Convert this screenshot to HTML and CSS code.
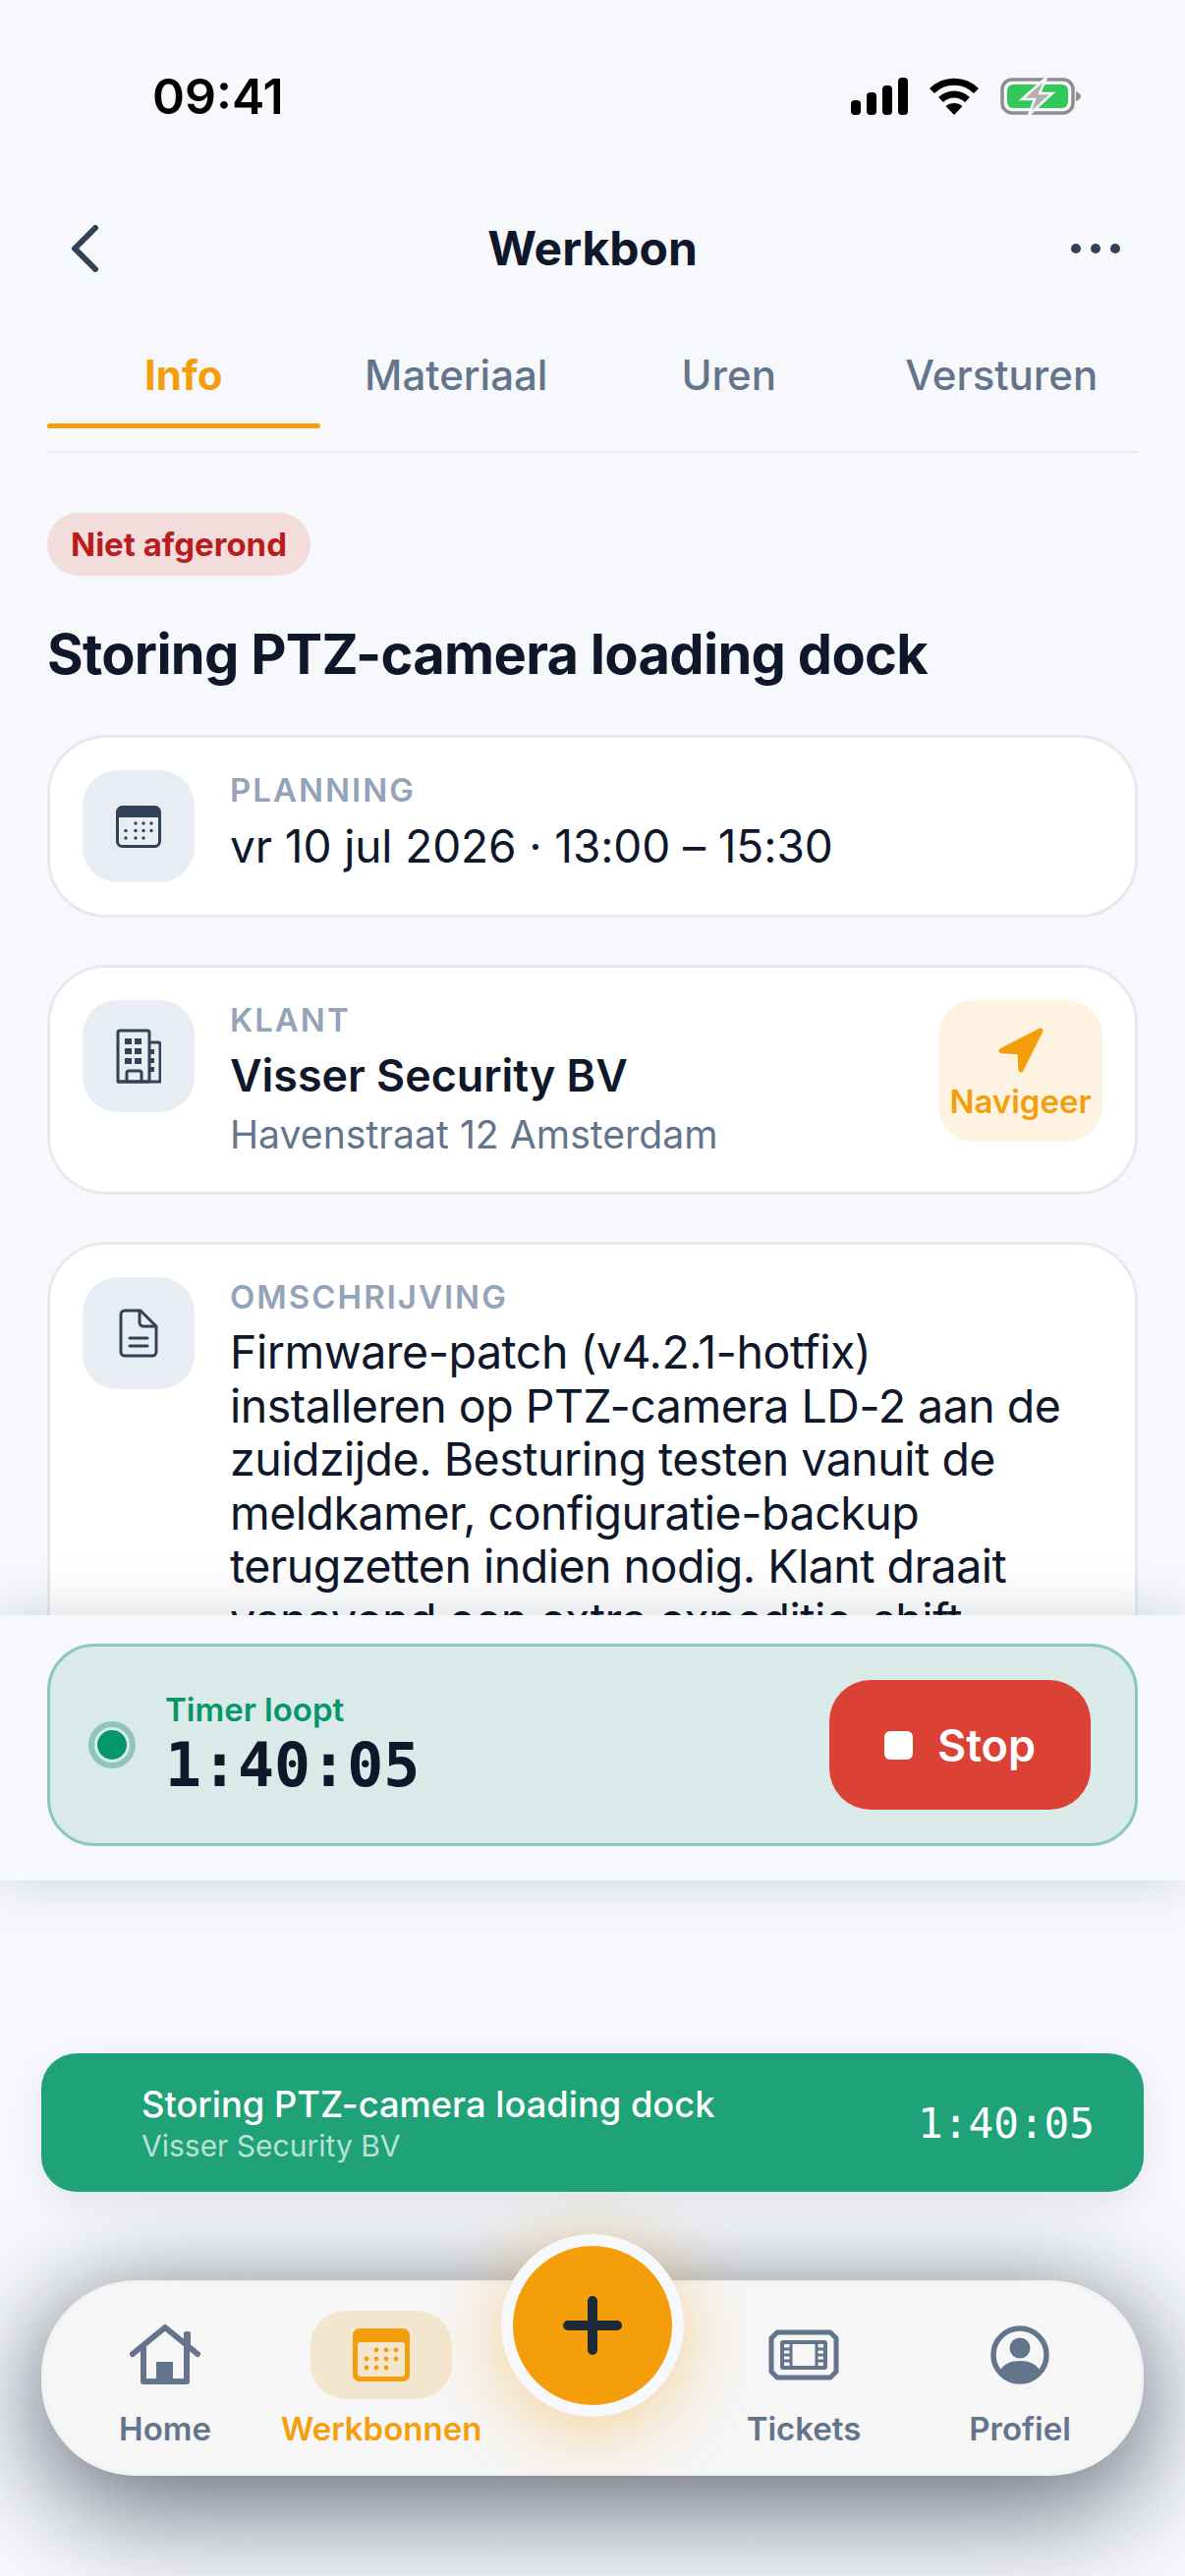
FILE: index.html
```html
<!DOCTYPE html>
<html lang="nl">
<head>
<meta charset="utf-8">
<title>Werkbon</title>
<link rel="stylesheet" href="styles.css">
</head>
<body>
<div class="app">
  <div class="status">
    <span class="clock">09:41</span>
    <div class="status-icons">
      <svg class="i-signal" viewBox="0 0 58 38"><rect x="0" y="23" width="10" height="15" rx="4"/><rect x="16" y="15" width="10" height="23" rx="4"/><rect x="32" y="8" width="10" height="30" rx="4"/><rect x="48" y="0" width="10" height="38" rx="4"/></svg>
      <svg class="i-wifi" viewBox="0 0 52 38"><path d="M3.500 13.500C16 1 36 1 48.500 13.500" fill="none" stroke="#000" stroke-width="7"/><path d="M12.500 22.500C20 15 32 15 39.500 22.500" fill="none" stroke="#000" stroke-width="7"/><path d="M17.500 29C22 25 30 25 34.500 29L26 38Z"/></svg>
      <svg class="i-batt" viewBox="0 0 82 40"><rect x="2" y="3" width="72" height="34" rx="10" fill="none" stroke="#8e8e8e" stroke-width="3.500"/><rect x="7" y="8" width="62" height="24" rx="6" fill="#34c759"/><path d="M77 15c3 1 5 3 5 5s-2 4-5 5Z" fill="#8e8e8e"/><path d="M47 1 22 23h13l-6 16 24-22H40Z" fill="#b0b0b0" stroke="#f6f8fb" stroke-width="2.500"/></svg>
    </div>
  </div>

  <header class="topbar">
    <svg class="i-back" viewBox="0 0 30 48"><path d="M26 3 5 24l21 21" fill="none" stroke="#334155" stroke-width="6" stroke-linecap="round" stroke-linejoin="round"/></svg>
    <h1 class="topbar-title">Werkbon</h1>
    <div class="dots"><span></span><span></span><span></span></div>
  </header>

  <nav class="tabs">
    <div class="tab tab-on">Info</div>
    <div class="tab">Materiaal</div>
    <div class="tab">Uren</div>
    <div class="tab">Versturen</div>
  </nav>

  <main class="scroll">
    <span class="badge">Niet afgerond</span>
    <h2 class="job-title">Storing PTZ-camera loading dock</h2>

    <section class="card">
      <div class="icon-box">
        <svg class="i-cal" viewBox="0 0 46 43"><rect x="1.500" y="1.500" width="43" height="40" rx="5" fill="none" stroke="#334155" stroke-width="3"/><path d="M1.500 7a5 5 0 0 1 5-5.500h33a5 5 0 0 1 5 5.500v5h-43Z" fill="#334155"/><g fill="#334155"><circle cx="20" cy="18" r="1.700"/><circle cx="28" cy="18" r="1.700"/><circle cx="36" cy="18" r="1.700"/><circle cx="10" cy="25.500" r="1.700"/><circle cx="20" cy="25.500" r="1.700"/><circle cx="28" cy="25.500" r="1.700"/><circle cx="36" cy="25.500" r="1.700"/><circle cx="10" cy="33" r="1.700"/><circle cx="20" cy="33" r="1.700"/><circle cx="28" cy="33" r="1.700"/></g></svg>
      </div>
      <div class="body">
        <div class="label">PLANNING</div>
        <div class="value">vr 10 jul 2026 · 13:00 – 15:30</div>
      </div>
    </section>

    <section class="card">
      <div class="icon-box">
        <svg class="i-bld" viewBox="0 0 46 56"><path d="M2 54V4a2 2 0 0 1 2-2h28a2 2 0 0 1 2 2v50Z" fill="none" stroke="#334155" stroke-width="3" stroke-linejoin="round"/><path d="M34 14h9a2 2 0 0 1 2 2v38H2" fill="none" stroke="#334155" stroke-width="3" stroke-linejoin="round"/><path d="M11 54v-9a2 2 0 0 1 2-2h11a2 2 0 0 1 2 2v9" fill="none" stroke="#334155" stroke-width="3"/><g fill="#334155"><rect x="9" y="10" width="7" height="6"/><rect x="19" y="10" width="7" height="6"/><rect x="9" y="20" width="7" height="6"/><rect x="19" y="20" width="7" height="6"/><rect x="9" y="30" width="7" height="6"/><rect x="19" y="30" width="7" height="6"/><rect x="34" y="21" width="5" height="5"/><rect x="34" y="30" width="5" height="5"/><rect x="34" y="39" width="5" height="5"/></g></svg>
      </div>
      <div class="body">
        <div class="label">KLANT</div>
        <div class="value value-strong">Visser Security BV</div>
        <div class="address">Havenstraat 12 Amsterdam</div>
      </div>
      <div class="nav-btn">
        <svg class="i-nav" viewBox="0 0 44 44"><path d="M41 3 3 22.500 21 23.500 22 41Z" fill="#f59e0b" stroke="#f59e0b" stroke-width="5" stroke-linejoin="round"/></svg>
        <span class="nav-btn-text">Navigeer</span>
      </div>
    </section>

    <section class="card">
      <div class="icon-box">
        <svg class="i-doc" viewBox="0 0 40 50"><path d="M22 2H6a4 4 0 0 0-4 4v38a4 4 0 0 0 4 4h28a4 4 0 0 0 4-4V18Z" fill="none" stroke="#334155" stroke-width="3" stroke-linejoin="round"/><path d="M21 2v12a4 4 0 0 0 4 4h13" fill="none" stroke="#334155" stroke-width="3"/><path d="M11 30h18M11 38h18" stroke="#334155" stroke-width="3" stroke-linecap="round"/></svg>
      </div>
      <div class="body">
        <div class="label">OMSCHRIJVING</div>
        <div class="desc">Firmware-patch (v4.2.1-hotfix) installeren op PTZ-camera LD-2 aan de zuidzijde. Besturing testen vanuit de meldkamer, configuratie-backup terugzetten indien nodig. Klant draait vanavond een extra expeditie-shift.</div>
      </div>
    </section>
  </main>

  <section class="timer-panel">
    <div class="timer">
      <span class="pulse"><span class="pulse-dot"></span></span>
      <div class="timer-body">
        <div class="timer-label">Timer loopt</div>
        <div class="timer-time">1:40:05</div>
      </div>
      <div class="stop"><span class="stop-square"></span><span>Stop</span></div>
    </div>
  </section>

  <section class="live-bar">
    <div class="live-text">
      <div class="live-title">Storing PTZ-camera loading dock</div>
      <div class="live-sub">Visser Security BV</div>
    </div>
    <div class="live-time">1:40:05</div>
  </section>

  <nav class="tabbar">
    <div class="item">
      <div class="item-icon">
        <svg class="i-home" viewBox="0 0 72 62"><path d="M3 30 36 3l33 27" fill="none" stroke="#64748b" stroke-width="6" stroke-linecap="round" stroke-linejoin="round"/><path d="M14 23v35h44V23" fill="none" stroke="#64748b" stroke-width="6" stroke-linejoin="round"/><rect x="27" y="38" width="17" height="20" fill="#64748b"/><rect x="55" y="7" width="7" height="20" rx="2" fill="#64748b"/></svg>
      </div>
      <span class="item-label">Home</span>
    </div>
    <div class="item item-on">
      <div class="item-icon item-icon-on">
        <svg class="i-cal2" viewBox="0 0 58 54"><rect x="0" y="0" width="58" height="54" rx="7" fill="#f59e0b"/><rect x="5" y="14" width="48" height="35" rx="3" fill="#f3e6cf"/><g fill="#f59e0b"><circle cx="24" cy="22" r="2.400"/><circle cx="34" cy="22" r="2.400"/><circle cx="44" cy="22" r="2.400"/><circle cx="14" cy="31" r="2.400"/><circle cx="24" cy="31" r="2.400"/><circle cx="34" cy="31" r="2.400"/><circle cx="44" cy="31" r="2.400"/><circle cx="14" cy="40" r="2.400"/><circle cx="24" cy="40" r="2.400"/><circle cx="34" cy="40" r="2.400"/></g></svg>
      </div>
      <span class="item-label">Werkbonnen</span>
    </div>
    <div class="item-gap"></div>
    <div class="item">
      <div class="item-icon">
        <svg class="i-ticket" viewBox="0 0 72 52"><path d="M9 3h54l6 6v34l-6 6H9l-6-6V9Z" fill="none" stroke="#64748b" stroke-width="5" stroke-linejoin="round"/><rect x="14" y="13" width="44" height="26" fill="none" stroke="#64748b" stroke-width="4" rx="1"/><path d="M23 13v26M49 13v26" stroke="#64748b" stroke-width="3"/><path d="M14 20h9M14 26h9M14 32h9M49 20h9M49 26h9M49 32h9" stroke="#64748b" stroke-width="3"/></svg>
      </div>
      <span class="item-label">Tickets</span>
    </div>
    <div class="item">
      <div class="item-icon">
        <svg class="i-user" viewBox="0 0 60 60"><circle cx="30" cy="30" r="27" fill="none" stroke="#64748b" stroke-width="5.500"/><circle cx="30" cy="23" r="10.500" fill="#64748b"/><path d="M9 47c4-8 12-11 21-11s17 3 21 11c-5 7-13 11-21 11S14 54 9 47Z" fill="#64748b"/></svg>
      </div>
      <span class="item-label">Profiel</span>
    </div>
    <div class="fab">
      <svg class="i-plus" viewBox="0 0 60 60"><path d="M30 5v50M5 30h50" stroke="#1f2937" stroke-width="10" stroke-linecap="round"/></svg>
    </div>
  </nav>
</div>
</body>
</html>
```
FILE: styles.css
```css
* { box-sizing: border-box; }
html, body { margin: 0; padding: 0; }
body {
  width: 1206px;
  height: 2622px;
  overflow: hidden;
  background: #f6f8fb;
  font-family: Inter, "Noto Sans", sans-serif;
  color: #0f172a;
}
.app { width: 1206px; height: 2622px; display: flex; flex-direction: column; }

.status { height: 196px; display: flex; align-items: center; justify-content: space-between; padding: 0 106px 0 155px; flex: none; }
.clock { font-size: 50px; font-weight: 600; color: #000; line-height: 1; }
.status-icons { display: flex; align-items: center; gap: 23px; }
.i-signal { width: 58px; height: 38px; display: block; }
.i-wifi { width: 52px; height: 38px; display: block; margin-left: -2px; }
.i-batt { width: 82px; height: 40px; display: block; margin-left: -2px; }

.topbar { height: 114px; flex: none; display: flex; align-items: center; justify-content: space-between; padding: 0 66px 0 71px; position: relative; }
.i-back { width: 30px; height: 48px; display: block; }
.topbar-title { position: absolute; left: 0; right: 0; text-align: center; margin: 0; font-size: 48px; font-weight: 700; line-height: 58px; color: #0f172a; }
.dots { display: flex; gap: 10px; }
.dots span { width: 10px; height: 10px; border-radius: 50%; background: #334155; }

.tabs { flex: none; margin: 0 48px; display: flex; padding-bottom: 23px; border-bottom: 2px solid #e7ebf0; }
.tab { flex: 1; padding-top: 41px; text-align: center; font-size: 42px; line-height: 62px; font-weight: 500; color: #64748b; height: 126px; }
.tab-on { color: #f59e0b; font-weight: 700; }
.tab-on::after { content: ""; display: block; height: 5px; margin-top: 18px; border-radius: 3px; background: #f59e0b; }

.scroll { height: 1183px; flex: none; overflow: hidden; padding: 61px 48px 0; display: flex; flex-direction: column; }
.badge { align-self: flex-start; height: 64px; padding: 0 24px; border-radius: 32px; background: #f2dcdc; color: #b91c1c; font-size: 33px; font-weight: 700; line-height: 64px; flex: none; }
.job-title { margin: 47px 0 0; font-size: 56px; line-height: 66px; font-weight: 700; letter-spacing: -0.700px; color: #0f172a; flex: none; }
.card { flex: none; margin-top: 48px; background: #fff; border: 3px solid #e6eaef; border-radius: 60px; padding: 33px; display: flex; align-items: flex-start; gap: 36px; }
.job-title + .card { margin-top: 49px; }
.icon-box { flex: none; width: 114px; height: 114px; border-radius: 36px; background: #e8edf3; display: flex; align-items: center; justify-content: center; }
.i-cal { width: 46px; height: 43px; display: block; }
.i-bld { width: 46px; height: 56px; display: block; }
.i-doc { width: 40px; height: 50px; display: block; }
.body { flex: 1; min-width: 0; }
.label { font-size: 33px; line-height: 41px; font-weight: 600; letter-spacing: 2px; color: #94a3b8; }
.value { margin-top: 7px; font-size: 46px; line-height: 58px; font-weight: 400; letter-spacing: -0.100px; color: #0f172a; }
.value-strong { font-size: 44.800px; font-weight: 600; letter-spacing: 0; }
.address { margin-top: 6px; font-size: 39.200px; line-height: 50px; color: #64748b; }
.desc { margin-top: 8px; padding-right: 27px; font-size: 46.500px; line-height: 54.600px; letter-spacing: -0.500px; color: #0f172a; }
.nav-btn { flex: none; width: 167px; height: 144px; border-radius: 36px; background: #fef3e0; display: flex; flex-direction: column; align-items: center; padding-top: 28px; }
.i-nav { width: 46px; height: 46px; display: block; }
.nav-btn-text { margin-top: 7px; font-size: 33px; line-height: 44px; font-weight: 600; color: #f59e0b; }

.timer-panel { position: relative; z-index: 2; flex: none; height: 270px; padding: 29px 48px 0; background: #f6f8fb; box-shadow: 0 0 54px rgba(15, 23, 42, .16); }
.timer { height: 206px; border: 3px solid #8bc9b4; border-radius: 48px; background: #d9eae8; display: flex; align-items: center; padding: 0 45px 0 39px; }
.pulse { flex: none; width: 48px; height: 48px; border-radius: 50%; background: #8cc8b5; display: flex; align-items: center; justify-content: center; }
.pulse-dot { width: 36px; height: 36px; border-radius: 50%; background: #059669; border: 3px solid #d9eae8; }
.timer-body { flex: 1; margin-left: 30px; }
.timer-label { font-size: 33px; line-height: 42px; font-weight: 600; color: #059669; }
.timer-time { font-family: "DejaVu Sans Mono", "Liberation Mono", monospace; font-size: 61.500px; line-height: 72px; font-weight: 700; color: #0f172a; }
.stop { flex: none; width: 266px; height: 132px; border-radius: 42px; background: #dc4136; color: #fff; display: flex; align-items: center; justify-content: center; gap: 25px; font-size: 45px; font-weight: 600; }
.stop-square { width: 29px; height: 29px; border-radius: 6px; background: #fff; }

.live-bar { flex: none; margin: 176px 42px 0; height: 141px; border-radius: 36px; background: #1fa277; display: flex; align-items: center; justify-content: space-between; padding: 0 50px 0 102px; box-shadow: 0 12px 36px rgba(15, 23, 42, .08); color: #fff; position: relative; z-index: 3; }
.live-title { font-size: 36.300px; line-height: 46px; font-weight: 500; }
.live-sub { font-size: 30px; line-height: 38px; color: rgba(255, 255, 255, .7); }
.live-time { font-family: "DejaVu Sans Mono", "Liberation Mono", monospace; font-size: 42.700px; font-weight: 500; }

.tabbar { position: relative; z-index: 2; flex: none; margin: 90px 42px 0; height: 199px; border-radius: 96px; background: #f6f6f6; border: 3px solid #f1f2f4; box-shadow: 0 18px 110px rgba(15, 23, 42, .6), 0 60px 120px rgba(15, 23, 42, .14); display: grid; grid-template-columns: 216px 224px 206px 224px 216px; padding: 28px 15px 0; align-items: start; }
.item { display: flex; flex-direction: column; align-items: center; }
.item-icon { width: 144px; height: 90px; display: flex; align-items: center; justify-content: center; border-radius: 36px; }
.item-icon-on { background: #f3e6cf; }
.item-label { margin-top: 8px; font-size: 33px; line-height: 44px; font-weight: 600; color: #64748b; white-space: nowrap; }
.item-on .item-label { color: #f59e0b; }
.i-home { width: 72px; height: 62px; display: block; }
.i-cal2 { width: 58px; height: 54px; display: block; }
.i-ticket { width: 72px; height: 52px; display: block; }
.i-user { width: 60px; height: 60px; display: block; }
.fab { position: absolute; left: 465px; top: -50px; width: 186px; height: 186px; border-radius: 50%; background: #f59e0b; border: 12px solid #f6f8fb; box-shadow: 0 12px 72px rgba(245, 158, 11, .42); display: flex; align-items: center; justify-content: center; }
.i-plus { width: 60px; height: 60px; display: block; }
```
